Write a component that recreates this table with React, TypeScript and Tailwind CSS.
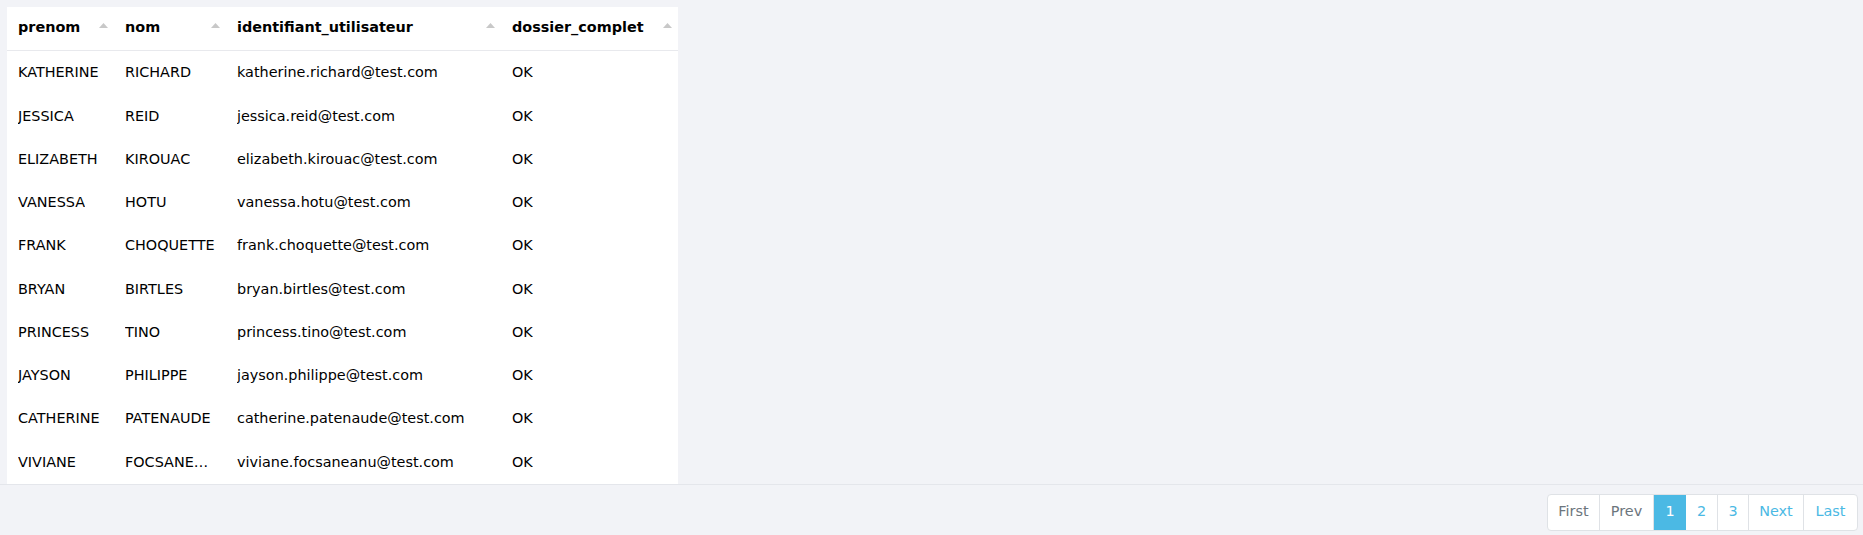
import React from "react";

const rows = [
  ["KATHERINE", "RICHARD", "katherine.richard@test.com", "OK"],
  ["JESSICA", "REID", "jessica.reid@test.com", "OK"],
  ["ELIZABETH", "KIROUAC", "elizabeth.kirouac@test.com", "OK"],
  ["VANESSA", "HOTU", "vanessa.hotu@test.com", "OK"],
  ["FRANK", "CHOQUETTE", "frank.choquette@test.com", "OK"],
  ["BRYAN", "BIRTLES", "bryan.birtles@test.com", "OK"],
  ["PRINCESS", "TINO", "princess.tino@test.com", "OK"],
  ["JAYSON", "PHILIPPE", "jayson.philippe@test.com", "OK"],
  ["CATHERINE", "PATENAUDE", "catherine.patenaude@test.com", "OK"],
  ["VIVIANE", "FOCSANEANU", "viviane.focsaneanu@test.com", "OK"],
];

const cols = [
  { name: "prenom", w: "w-[107px]" },
  { name: "nom", w: "w-[112px]" },
  { name: "identifiant_utilisateur", w: "w-[275px]" },
  { name: "dossier_complet", w: "w-[177px]" },
];

function SortArrow() {
  return (
    <svg width="9" height="5" viewBox="0 0 9 5" className="absolute right-[6px] top-[16px]">
      <path d="M0 5 L4.5 0 L9 5 Z" fill="#c8c8c8" />
    </svg>
  );
}

export default function App() {
  return (
    <div
      className="w-[1863px] h-[535px] bg-[#f2f3f7] text-[14.4px] text-black"
      style={{ fontFamily: '"DejaVu Sans", sans-serif' }}
    >
      <div className="pt-[7px] pl-[7px] border-b border-[#e4e6eb]">
        <div className="w-[671px] bg-white">
          <div className="flex h-[44px] border-b border-[#e8e9ed]">
            {cols.map((c) => (
              <div key={c.name} className={`${c.w} relative flex items-center pl-[11px] pb-[2px] font-bold`}>
                {c.name}
                <SortArrow />
              </div>
            ))}
          </div>
          {rows.map((r, i) => (
            <div key={i} className="flex h-[43.25px]">
              {r.map((v, j) => (
                <div key={j} className={`${cols[j].w} flex items-center pl-[11px] pr-[10px] pt-[1px] min-w-0`}>
                  <span className="truncate">{v}</span>
                </div>
              ))}
            </div>
          ))}
        </div>
      </div>
      <div className="flex justify-end pt-[9px] pr-[5px]">
        <div className="flex h-[37px] rounded-[4px] border border-[#dfe2e6] bg-white overflow-hidden text-[14.4px]">
          <button className="w-[52px] text-[#6c757d] border-r border-[#dfe2e6]">First</button>
          <button className="w-[54px] text-[#6c757d] border-r border-[#dfe2e6]">Prev</button>
          <button className="w-[32px] bg-[#4bb9e4] text-white">1</button>
          <button className="w-[32px] text-[#4bb9e4] border-r border-[#dfe2e6]">2</button>
          <button className="w-[31px] text-[#4bb9e4] border-r border-[#dfe2e6]">3</button>
          <button className="w-[55px] text-[#4bb9e4] border-r border-[#dfe2e6]">Next</button>
          <button className="w-[53px] text-[#4bb9e4]">Last</button>
        </div>
      </div>
    </div>
  );
}
